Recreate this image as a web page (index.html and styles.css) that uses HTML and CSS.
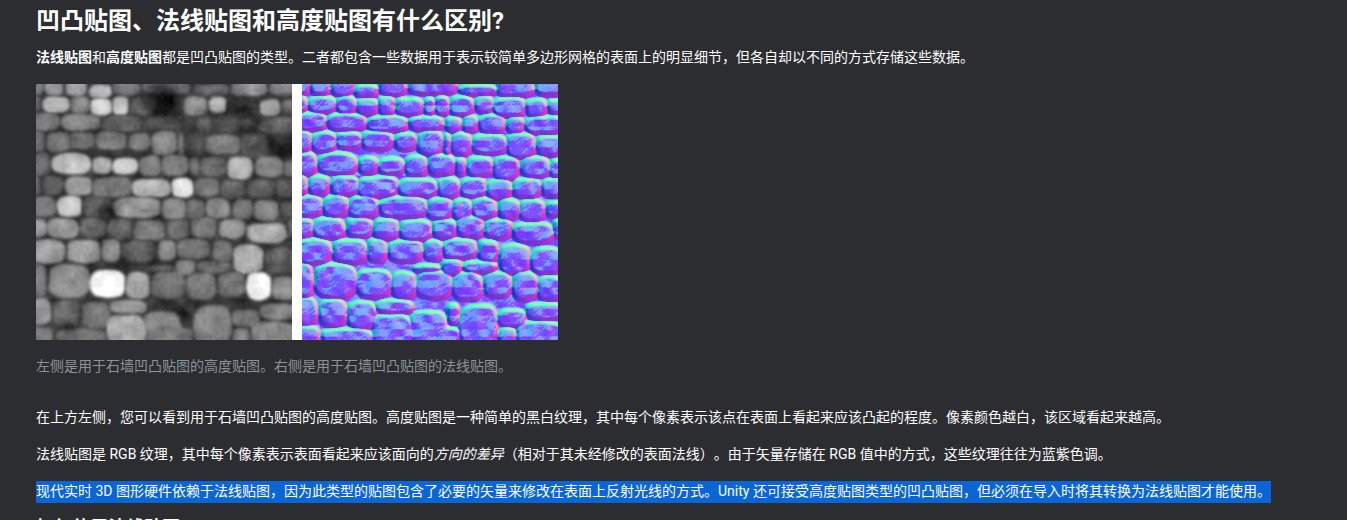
FILE: index.html
```html
<!DOCTYPE html>
<html lang="zh-CN">
<head>
    <meta charset="UTF-8">
    <title>凹凸贴图、法线贴图和高度贴图有什么区别?</title>
    <link rel="stylesheet" href="styles.css">
</head>
<body>
    <div class="content">
        <h2 class="section-title">凹凸贴图、法线贴图和高度贴图有什么区别?</h2>
        <p class="text intro"><strong>法线贴图</strong>和<strong>高度贴图</strong>都是凹凸贴图的类型。二者都包含一些数据用于表示较简单多边形网格的表面上的明显细节，但各自却以不同的方式存储这些数据。</p>

        <div class="figure">
            <canvas id="height-map" width="256" height="256"></canvas>
            <canvas id="normal-map" width="256" height="256"></canvas>
        </div>
        <p class="text caption">左侧是用于石墙凹凸贴图的高度贴图。右侧是用于石墙凹凸贴图的法线贴图。</p>

        <p class="text">在上方左侧，您可以看到用于石墙凹凸贴图的高度贴图。高度贴图是一种简单的黑白纹理，其中每个像素表示该点在表面上看起来应该凸起的程度。像素颜色越白，该区域看起来越高。</p>
        <p class="text">法线贴图是 RGB 纹理，其中每个像素表示表面看起来应该面向的<em>方向的差异</em>（相对于其未经修改的表面法线）。由于矢量存储在 RGB 值中的方式，这些纹理往往为蓝紫色调。</p>
        <p class="text selected">现代实时 3D 图形硬件依赖于法线贴图，因为此类型的贴图包含了必要的矢量来修改在表面上反射光线的方式。Unity 还可接受高度贴图类型的凹凸贴图，但必须在导入时将其转换为法线贴图才能使用。</p>
        <h3 class="sub-title">如何使用法线贴图</h3>
    </div>
    <script src="script.js"></script>
</body>
</html>
```
FILE: styles.css
```css
* {
    margin: 0;
    padding: 0;
    box-sizing: border-box;
}

body {
    font-family: Roboto, "Noto Sans CJK SC", sans-serif;
    text-spacing-trim: space-all;
    background: #2b2d31;
    color: #ffffff;
    height: 520px;
    overflow: hidden;
}

.content {
    padding: 6px 36px 0;
}

.section-title {
    font-size: 24px;
    line-height: 30px;
    font-weight: 700;
    margin-bottom: 11px;
}

.text {
    font-size: 14px;
    line-height: 20px;
    padding-bottom: 2px;
    margin-bottom: 15px;
}

.text strong {
    font-weight: 700;
}

.figure {
    display: flex;
    gap: 10px;
    width: 522px;
    background: #ffffff;
}

.figure canvas {
    display: block;
    width: 256px;
    height: 256px;
}

.caption {
    color: #8b9399;
    margin-top: 16px;
    margin-bottom: 29px;
}

.selected {
    width: fit-content;
    background: #0a66d4;
}

.sub-title {
    font-size: 18px;
    line-height: 20px;
    font-weight: 700;
}
```
FILE: script.js
```js
// stones measured off the reference at 3x: x0, y0, x1, y1, tone
const stones = [
    [0,0,22,30,120],[27,0,82,33,140],[90,0,152,36,150],[160,3,227,40,170],[232,0,312,33,110],[322,0,462,30,105],[472,3,582,33,95],[587,0,692,36,130],[702,0,768,33,120],
    [0,38,14,83,100],[20,38,100,86,180],[104,38,162,88,130],[164,43,227,93,200],[230,38,277,93,190],[282,43,362,93,80],[367,43,397,93,35],[400,38,440,93,55],[444,38,514,93,130],[520,38,572,86,170],[574,43,667,98,60],[672,46,734,96,160],[737,48,768,88,100],
    [0,88,72,138,110],[74,90,192,138,120],[197,96,314,143,90],[322,98,422,138,75],[432,100,477,143,50],[482,96,527,143,75],[530,93,607,146,70],[614,100,664,146,60],[672,98,768,148,90],
    [0,143,27,203,110],[30,146,102,203,115],[102,146,177,193,105],[180,143,272,196,120],[280,148,342,198,115],[347,143,422,213,130],[425,150,445,213,95],[447,148,507,213,70],[512,153,612,210,110],[614,150,700,220,80],[702,158,768,213,45],
    [0,208,44,273,100],[50,208,164,270,185],[170,220,227,270,170],[230,223,307,270,195],[310,216,374,276,130],[377,213,457,273,125],[460,223,490,273,100],[494,220,570,276,100],[574,220,650,286,175],[657,220,742,278,130],[744,228,768,278,110],
    [0,276,14,333,100],[20,276,82,333,100],[87,278,167,333,155],[170,280,287,340,115],[290,286,404,338,175],[407,283,472,340,225],[477,283,550,338,110],[554,288,627,343,90],[632,286,714,340,85],[720,286,768,338,85],
    [0,336,60,396,120],[64,336,137,398,195],[140,338,227,400,80],[234,340,372,400,145],[377,343,450,406,130],[452,346,507,406,105],[512,343,582,403,135],[590,346,650,406,115],[654,348,727,410,135],[732,353,768,398,90],
    [0,406,32,458,145],[34,403,127,463,150],[134,403,210,458,100],[214,406,287,466,95],[294,410,387,468,115],[392,408,462,463,100],[464,400,542,460,115],[550,406,627,463,140],[634,418,752,476,165],[754,408,768,458,100],
    [0,466,87,538,155],[94,468,192,536,155],[197,466,252,533,130],[260,470,360,533,90],[367,470,420,528,135],[422,466,522,523,110],[530,470,587,533,115],[594,483,680,568,165],[687,493,768,568,90],
    [0,540,30,638,120],[40,543,162,640,135],[164,558,267,640,250],[270,566,342,643,165],[344,563,447,643,110],[452,566,540,648,125],[547,566,627,638,115],[632,566,704,648,245],[707,578,768,648,130],[337,543,414,563,90],[420,528,477,573,130],[482,533,582,566,100],
    [0,643,44,723,140],[52,648,132,728,95],[137,653,222,733,110],[222,648,332,688,135],[214,693,332,768,165],[327,683,432,758,130],[472,666,587,768,130],[587,678,672,728,110],[672,658,768,708,120],[647,713,768,768,130],[437,660,470,720,60],
    [0,728,50,768,110],[60,735,210,768,100],[332,730,470,768,115],[590,732,640,768,125]
];

// dark hollows in the wall: x, y, radius, strength
const hollows = [[385, 50, 75, 0.9], [445, 690, 30, 0.6], [765, 195, 45, 0.6], [630, 70, 45, 0.5], [90, 725, 30, 0.5], [225, 375, 45, 0.4]];

// repeatable random numbers
let seed = 7;
function rand() {
    seed = (seed * 16807) % 2147483647;
    return seed / 2147483647;
}

// smooth noise from a 64x64 grid
const grid = [];
for (let i = 0; i < 4096; i++) grid.push(rand());
function noise(x, y) {
    const ix = Math.floor(x);
    const iy = Math.floor(y);
    const fx = x - ix;
    const fy = y - iy;
    const a = grid[(iy & 63) * 64 + (ix & 63)];
    const b = grid[(iy & 63) * 64 + ((ix + 1) & 63)];
    const c = grid[((iy + 1) & 63) * 64 + (ix & 63)];
    const d = grid[((iy + 1) & 63) * 64 + ((ix + 1) & 63)];
    return (a * (1 - fx) + b * fx) * (1 - fy) + (c * (1 - fx) + d * fx) * fy;
}

// each stone gets one lumpy outline, shared by both maps
const outlines = stones.map(function (s) {
    const x0 = s[0] === 0 ? -14 : s[0];
    const y0 = s[1] === 0 ? -14 : s[1];
    const x1 = s[2] >= 768 ? 782 : s[2];
    const y1 = s[3] >= 768 ? 782 : s[3];
    const cx = (x0 + x1) / 2;
    const cy = (y0 + y1) / 2;
    const rx = (x1 - x0) / 2;
    const ry = (y1 - y0) / 2;
    const pts = [];
    for (let i = 0; i < 20; i++) {
        const t = i / 20 * Math.PI * 2;
        const c = Math.cos(t);
        const sn = Math.sin(t);
        const k = Math.pow(Math.pow(Math.abs(c), 3.5) + Math.pow(Math.abs(sn), 3.5), -1 / 3.5);
        const wobble = 0.97 + rand() * 0.12;
        pts.push([cx + rx * c * k * wobble, cy + ry * sn * k * wobble]);
    }
    return { pts: pts, cx: cx, cy: cy, rx: rx, ry: ry, tone: s[4] };
});

function stonePath(ctx, pts) {
    ctx.beginPath();
    pts.forEach(function (p, i) {
        const next = pts[(i + 1) % pts.length];
        const mx = (p[0] + next[0]) / 2;
        const my = (p[1] + next[1]) / 2;
        if (i === 0) ctx.moveTo(mx, my);
        else ctx.quadraticCurveTo(p[0], p[1], mx, my);
    });
    ctx.quadraticCurveTo(pts[0][0], pts[0][1], (pts[0][0] + pts[1][0]) / 2, (pts[0][1] + pts[1][1]) / 2);
    ctx.closePath();
}

function grey(v) {
    const g = Math.max(0, Math.min(255, Math.round(v)));
    return 'rgb(' + g + ',' + g + ',' + g + ')';
}

// the wall at 256px. withTone=false gives every stone the same height, domed towards the top
function drawWall(ctx, withTone) {
    ctx.setTransform(1, 0, 0, 1, 0, 0);
    ctx.fillStyle = withTone ? '#383838' : '#303030';
    ctx.fillRect(0, 0, 256, 256);
    ctx.setTransform(1 / 3, 0, 0, 1 / 3, 0, 0);
    ctx.filter = withTone ? 'blur(1.6px)' : 'blur(0.8px)';
    outlines.forEach(function (o) {
        const tone = withTone ? o.tone : 165;
        const spread = withTone ? 24 : 35;
        const g = ctx.createRadialGradient(o.cx, o.cy - o.ry * 0.3, 2, o.cx, o.cy, Math.max(o.rx, o.ry) * 1.25);
        g.addColorStop(0, grey(tone + spread * 0.6));
        g.addColorStop(0.65, grey(tone));
        g.addColorStop(1, grey(tone - spread));
        ctx.fillStyle = g;
        stonePath(ctx, o.pts);
        ctx.fill();
    });
    ctx.filter = 'none';
    if (withTone) {
        hollows.forEach(function (h) {
            const g = ctx.createRadialGradient(h[0], h[1], 2, h[0], h[1], h[2]);
            g.addColorStop(0, 'rgba(0,0,0,' + h[3] + ')');
            g.addColorStop(1, 'rgba(0,0,0,0)');
            ctx.fillStyle = g;
            ctx.fillRect(h[0] - h[2], h[1] - h[2], h[2] * 2, h[2] * 2);
        });
    }
    ctx.setTransform(1, 0, 0, 1, 0, 0);
}

const heightCtx = document.getElementById('height-map').getContext('2d');
drawWall(heightCtx, true);
const heightImg = heightCtx.getImageData(0, 0, 256, 256);
for (let y = 0; y < 256; y++) {
    for (let x = 0; x < 256; x++) {
        const i = (y * 256 + x) * 4;
        const v = heightImg.data[i] + (noise(x / 9, y / 9) - 0.5) * 40 + (noise(x / 3, y / 3) - 0.5) * 16;
        heightImg.data[i] = heightImg.data[i + 1] = heightImg.data[i + 2] = v;
    }
}
heightCtx.putImageData(heightImg, 0, 0);

const scratch = document.createElement('canvas');
scratch.width = scratch.height = 256;
const scratchCtx = scratch.getContext('2d');
drawWall(scratchCtx, false);
const shape = scratchCtx.getImageData(0, 0, 256, 256).data;

function heightAt(x, y) {
    x = Math.max(0, Math.min(255, x));
    y = Math.max(0, Math.min(255, y));
    return shape[(y * 256 + x) * 4] + noise(x / 7, y / 7) * 50 + noise((x + y) / 1.6, (y - x) / 5) * 7;
}

const normalCtx = document.getElementById('normal-map').getContext('2d');
const out = normalCtx.createImageData(256, 256);
for (let y = 0; y < 256; y++) {
    for (let x = 0; x < 256; x++) {
        const dx = (heightAt(x + 1, y) - heightAt(x - 1, y)) * 0.024;
        const dy = (heightAt(x, y + 1) - heightAt(x, y - 1)) * 0.03;
        const len = Math.sqrt(dx * dx + dy * dy + 1);
        const i = (y * 256 + x) * 4;
        out.data[i] = (1 - dx / len) * 128 - 2;
        out.data[i + 1] = Math.max(55, (1 + dy / len) * 128 + (dy > 0 ? 10 : -30));
        out.data[i + 2] = Math.max(195, (1 / len) * 255 + 8);
        out.data[i + 3] = 255;
    }
}
normalCtx.putImageData(out, 0, 0);
```
